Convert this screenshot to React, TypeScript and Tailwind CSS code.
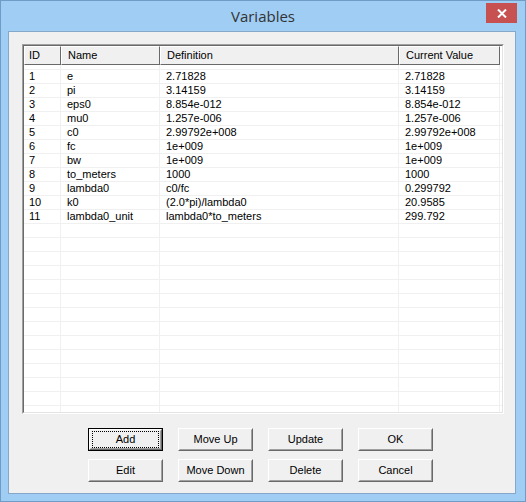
import { FC } from "react";

const rows = [
  ["1", "e", "2.71828", "2.71828"],
  ["2", "pi", "3.14159", "3.14159"],
  ["3", "eps0", "8.854e-012", "8.854e-012"],
  ["4", "mu0", "1.257e-006", "1.257e-006"],
  ["5", "c0", "2.99792e+008", "2.99792e+008"],
  ["6", "fc", "1e+009", "1e+009"],
  ["7", "bw", "1e+009", "1e+009"],
  ["8", "to_meters", "1000", "1000"],
  ["9", "lambda0", "c0/fc", "0.299792"],
  ["10", "k0", "(2.0*pi)/lambda0", "20.9585"],
  ["11", "lambda0_unit", "lambda0*to_meters", "299.792"],
];

const cols = ["w-[37px]", "w-[99px]", "w-[239px]", "w-[101px]"];
const headers = ["ID", "Name", "Definition", "Current Value"];

const WinButton: FC<{ label: string; isDefault?: boolean }> = ({
  label,
  isDefault,
}) => (
  <div
    className={`w-[75px] h-[23px] ${
      isDefault ? "border border-[#000]" : ""
    } bg-[#f0f0f0]`}
  >
    <div className="w-full h-full border border-t-white border-l-white border-r-[#696969] border-b-[#696969]">
      <div className="w-full h-full border border-t-[#f0f0f0] border-l-[#f0f0f0] border-r-[#a0a0a0] border-b-[#a0a0a0] flex items-center justify-center">
        {isDefault ? (
          <div className="w-full h-full m-[1px] border border-dotted border-black flex items-center justify-center">
            {label}
          </div>
        ) : (
          label
        )}
      </div>
    </div>
  </div>
);

const App: FC = () => {
  const filler = Array.from({ length: 14 });
  return (
    <div
      className="w-[526px] h-[502px] bg-[#9fcdf3] border border-[#6f9bc6] flex flex-col text-[11px] text-black"
      style={{ fontFamily: '"Liberation Sans", Arial, sans-serif' }}
    >
      {/* title bar */}
      <div className="relative h-[30px] flex items-center justify-center">
        <span
          className="text-[15px] text-[#333] mt-[1px]"
          style={{ fontFamily: '"Open Sans", "Noto Sans", sans-serif' }}
        >
          Variables
        </span>
        <div className="absolute right-[8px] top-[2px] w-[31px] h-[20px] bg-[#c75050] flex items-center justify-center">
          <svg width="10" height="9" viewBox="0 0 10 9">
            <path
              d="M1 0.5 L9 8.5 M9 0.5 L1 8.5"
              stroke="white"
              strokeWidth="2"
            />
          </svg>
        </div>
      </div>

      {/* client area */}
      <div className="flex-1 ml-[7px] mr-[9px] mb-[7px] border border-[#85a7c9] bg-[#f0f0f0] flex flex-col pt-[12px] pl-[13px] pr-[11px]">
        {/* list view */}
        <div className="h-[370px] border border-t-[#a0a0a0] border-l-[#a0a0a0] border-r-white border-b-white">
          <div className="h-full border border-t-[#696969] border-l-[#696969] border-r-[#e3e3e3] border-b-[#e3e3e3] bg-white overflow-hidden flex flex-col">
            <div className="flex h-[19px] shrink-0">
              {headers.map((h, i) => (
                <div
                  key={h}
                  className={`${cols[i]} h-full bg-[#f0f0f0] border border-t-white border-l-white border-r-[#696969] border-b-[#696969] flex items-center ${
                    i === 0 ? "pl-[4px]" : "pl-[6px]"
                  }`}
                >
                  {h}
                </div>
              ))}
            </div>
            <div className="h-[5px] shrink-0 flex border-b border-[#f0f0f0]">
              {cols.map((c, i) => (
                <div key={i} className={`${c} border-r border-[#f0f0f0]`} />
              ))}
            </div>
            {rows.map((r, ri) => (
              <div
                key={ri}
                className="flex h-[14px] shrink-0 border-b border-[#f0f0f0]"
              >
                {r.map((cell, ci) => (
                  <div
                    key={ci}
                    className={`${cols[ci]} border-r border-[#f0f0f0] ${
                      ci === 0 ? "pl-[5px]" : "pl-[6px]"
                    } leading-[13px] whitespace-nowrap`}
                  >
                    {cell}
                  </div>
                ))}
              </div>
            ))}
            {filler.map((_, ri) => (
              <div
                key={`f${ri}`}
                className="flex h-[14px] shrink-0 border-b border-[#f0f0f0]"
              >
                {cols.map((c, ci) => (
                  <div key={ci} className={`${c} border-r border-[#f0f0f0]`} />
                ))}
              </div>
            ))}
          </div>
        </div>

        {/* buttons */}
        <div className="mt-[14px] pr-[5px] flex flex-col items-center gap-[8px]">
          <div className="flex gap-[15px]">
            <WinButton label="Add" isDefault />
            <WinButton label="Move Up" />
            <WinButton label="Update" />
            <WinButton label="OK" />
          </div>
          <div className="flex gap-[15px]">
            <WinButton label="Edit" />
            <WinButton label="Move Down" />
            <WinButton label="Delete" />
            <WinButton label="Cancel" />
          </div>
        </div>
      </div>
    </div>
  );
};

export default App;
